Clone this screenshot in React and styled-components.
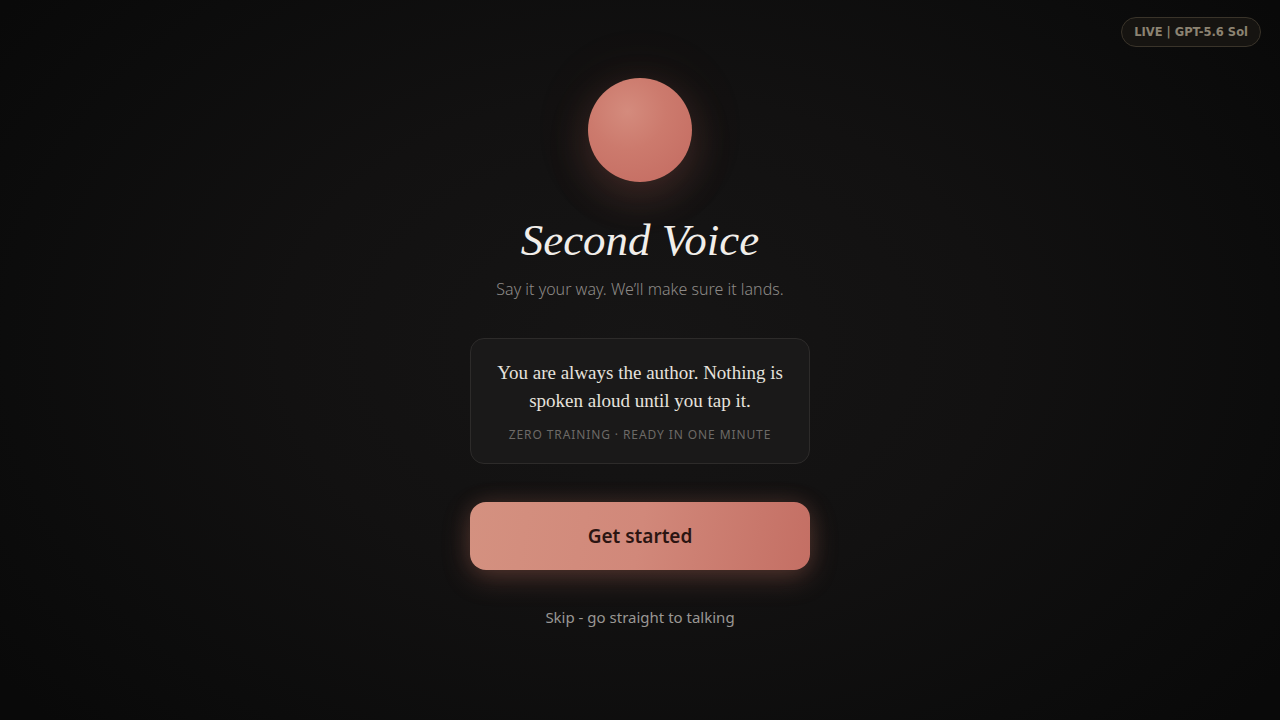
import React from 'react';
import styled, { createGlobalStyle } from 'styled-components';

const GlobalStyle = createGlobalStyle`
  html, body {
    margin: 0;
    padding: 0;
    background: #0b0b0b;
  }
  #root {
    min-height: 100vh;
  }
`;

const Page = styled.div`
  position: relative;
  width: 100vw;
  height: 100vh;
  overflow: hidden;
  background: radial-gradient(ellipse 62% 78% at 50% 48%, #161515 0%, #121111 45%, #0c0c0c 80%, #090909 100%);
  display: flex;
  flex-direction: column;
  align-items: center;
  font-family: 'Noto Sans', 'Open Sans', sans-serif;
`;

const StatusBadge = styled.div`
  position: absolute;
  top: 17px;
  right: 19px;
  height: 30px;
  box-sizing: border-box;
  padding: 0 12px;
  display: flex;
  align-items: center;
  border: 1px solid #3a342a;
  border-radius: 16px;
  background: #161411;
  color: #8c8372;
  font-family: 'DejaVu Sans', sans-serif;
  font-size: 11.5px;
  font-weight: 700;
`;

const Column = styled.main`
  width: 340px;
  display: flex;
  flex-direction: column;
  align-items: center;
  padding-top: 78px;
`;

const Orb = styled.div`
  width: 104px;
  height: 104px;
  border-radius: 50%;
  background: radial-gradient(circle at 38% 32%, #d48b7d 0%, #cc7a6d 40%, #c36a60 100%);
  box-shadow: 0 14px 40px rgba(200, 110, 95, 0.22), 0 0 70px rgba(200, 110, 95, 0.08);
`;

const Title = styled.h1`
  margin: 30px 0 0;
  font-family: 'Liberation Serif', 'DejaVu Serif', serif;
  font-style: italic;
  font-weight: 400;
  font-size: 45px;
  line-height: 56px;
  color: #f1eeea;
`;

const Tagline = styled.p`
  margin: 10px 0 0;
  font-size: 16px;
  font-weight: 300;
  line-height: 22px;
  color: #8d8a87;
`;

const Promise = styled.section`
  box-sizing: border-box;
  width: 100%;
  margin-top: 38px;
  padding: 20px 24px 20px;
  border-radius: 14px;
  border: 1px solid #2d2b2a;
  background: #1a1919;
  text-align: center;
`;

const PromiseText = styled.p`
  margin: 0;
  font-family: 'Liberation Serif', 'DejaVu Serif', serif;
  font-size: 19px;
  line-height: 28px;
  color: #e6e2dd;
`;

const PromiseMeta = styled.div`
  margin-top: 12px;
  font-size: 12px;
  letter-spacing: 0.9px;
  line-height: 16px;
  color: #6d6a67;
  text-transform: uppercase;
`;

const PrimaryButton = styled.button`
  width: 100%;
  height: 68px;
  margin-top: 38px;
  border: none;
  border-radius: 16px;
  background: linear-gradient(100deg, #d49180 0%, #d1887a 50%, #c46f64 100%);
  box-shadow: 0 8px 28px rgba(205, 120, 100, 0.28), 0 0 22px rgba(205, 120, 100, 0.12);
  color: #2b1512;
  font-family: 'Noto Sans', sans-serif;
  font-size: 19px;
  font-weight: 600;
  cursor: pointer;
`;

const SkipLink = styled.button`
  margin-top: 37px;
  border: none;
  background: none;
  padding: 0;
  font-family: 'Noto Sans', sans-serif;
  font-size: 15px;
  line-height: 20px;
  color: #9a9794;
  cursor: pointer;
`;

const App = () => (
  <>
    <GlobalStyle />
    <Page>
      <StatusBadge>LIVE | GPT-5.6 Sol</StatusBadge>
      <Column>
        <Orb />
        <Title>Second Voice</Title>
        <Tagline>Say it your way. We’ll make sure it lands.</Tagline>
        <Promise>
          <PromiseText>You are always the author. Nothing is spoken aloud until you tap it.</PromiseText>
          <PromiseMeta>Zero training · Ready in one minute</PromiseMeta>
        </Promise>
        <PrimaryButton>Get started</PrimaryButton>
        <SkipLink>Skip - go straight to talking</SkipLink>
      </Column>
    </Page>
  </>
);

export default App;
